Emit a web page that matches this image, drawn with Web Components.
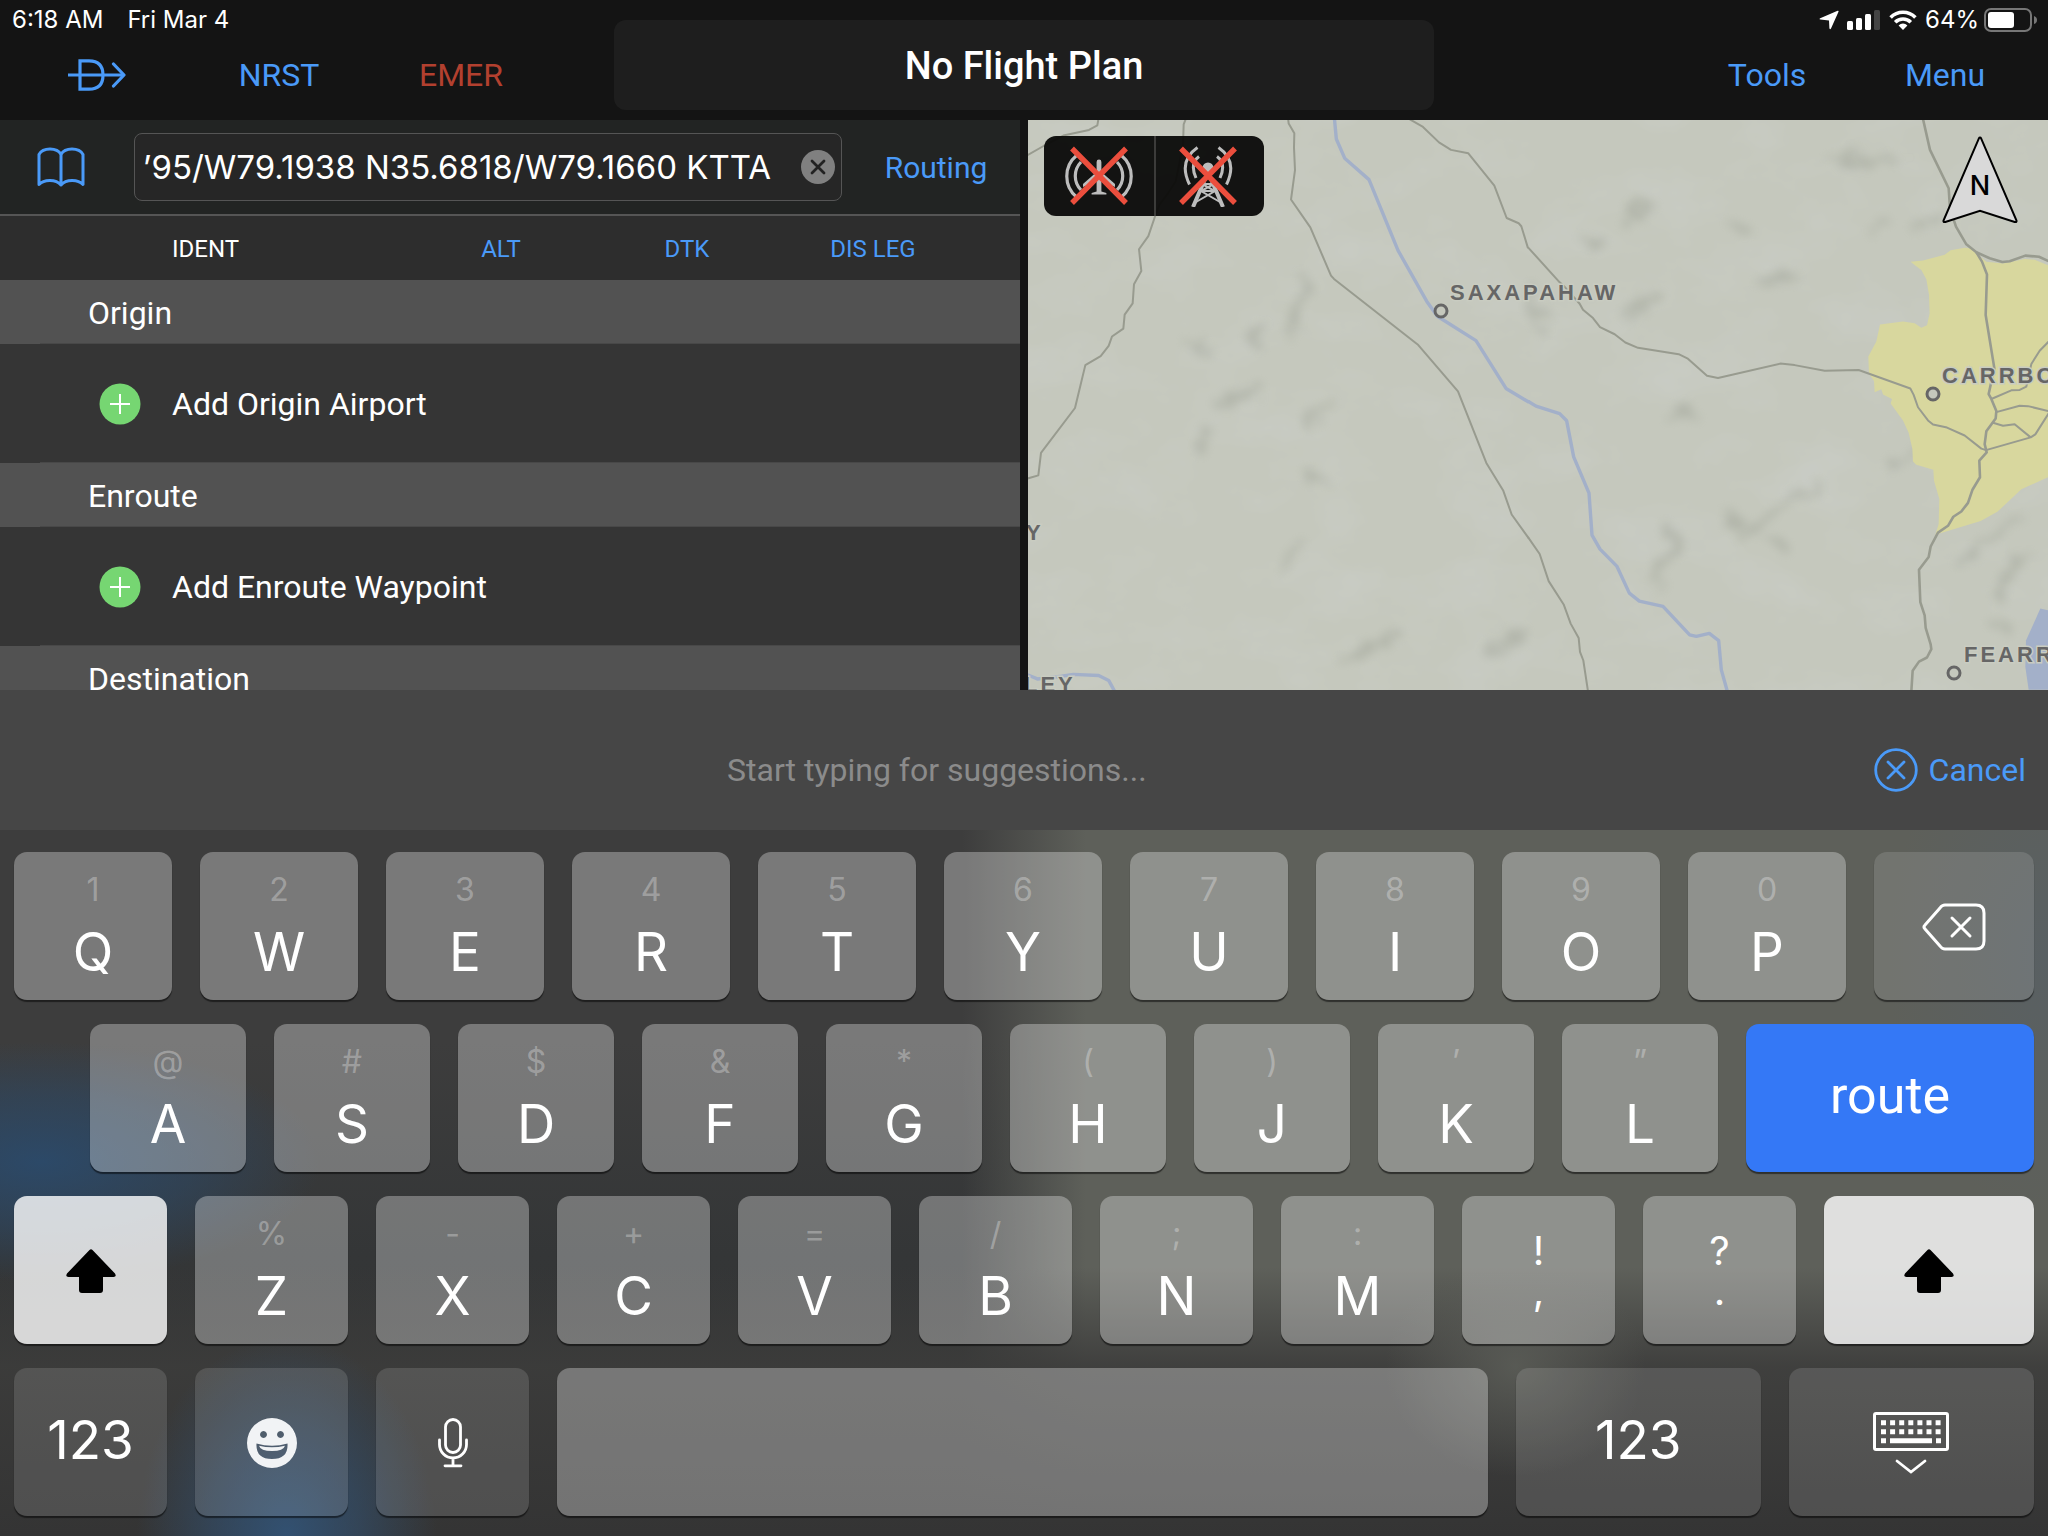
<!DOCTYPE html>
<html lang="en">
<head>
<meta charset="utf-8">
<title>Flight Plan</title>
<style>
  html, body { margin: 0; height: 100%; background: #141414; }
  body {
    font-family: Roboto, "Liberation Sans", sans-serif;
    color: #fff;
    --blue: #4a9af8;
    --body: 32px;
    --small: 24px;
    --wide-face: Inter, "Liberation Sans", sans-serif;
  }
</style>
</head>
<body>
<efb-app></efb-app>

<script>
const RESET = `
  *, *::before, *::after { box-sizing: border-box; }
  button { all: unset; box-sizing: border-box; cursor: pointer; display: flex; align-items: center; justify-content: center; }
  svg { display: block; flex: none; }
`;
function define(name, css, html, ready) {
  const template = document.createElement('template');
  template.innerHTML = `<style>${RESET}${css}</style>${html}`;
  customElements.define(name, class extends HTMLElement {
    constructor() {
      super();
      this.attachShadow({ mode: 'open' }).append(template.content.cloneNode(true));
    }
    connectedCallback() { if (ready) ready.call(this, this.shadowRoot); }
  });
}

/* ---------- status bar ---------- */
define('status-time', `
  :host { display: flex; align-items: center; gap: 24px; height: 40px; padding-left: 12px; font: 24px/40px var(--wide-face); }
`, `<span>6:18 AM</span><span>Fri Mar 4</span>`);

define('status-icons', `
  :host { display: flex; align-items: center; justify-content: flex-end; gap: 8px; height: 40px; padding-right: 10px; font: 24px/40px var(--wide-face); }
  .charge { display: flex; align-items: center; gap: 5px; }
`, `
  <svg width="20" height="20" viewBox="0 0 20 20"><path d="M18.6.8Q20 .4 19.4 2L12 18.6q-1 1.6-1.6-.4L10 10.4 1.400 9.600q-1.800-.4-.2-1.400z" fill="#fff"/></svg>
  <svg width="34" height="20" viewBox="0 0 34 20"><g fill="#fff"><rect y="11" width="6" height="9" rx="1.500"/><rect x="9" y="8" width="6" height="12" rx="1.500"/><rect x="18" y="4" width="6" height="16" rx="1.500"/></g><rect x="27" width="6" height="20" rx="1.500" fill="#444"/></svg>
  <svg width="28" height="20" viewBox="0 0 28 20"><g fill="none" stroke="#fff" stroke-width="3.600"><path d="M1.600 7.400a17.500 17.500 0 0 1 24.800 0"/><path d="M6.200 12.300a11 11 0 0 1 15.600 0"/></g><path d="M14 20l-4.400-4.600a6.200 6.200 0 0 1 8.800 0z" fill="#fff"/></svg>
  <span class="charge"><span>64%</span>
  <svg width="54" height="24" viewBox="0 0 54 24"><rect x="1" y="1" width="46" height="22" rx="6" fill="none" stroke="#777" stroke-width="2"/><rect x="4" y="4" width="26" height="16" rx="3" fill="#fff"/><path d="M50 8q3 1 3 4t-3 4z" fill="#777"/></svg></span>
`);

/* ---------- top bar ---------- */
define('top-bar', `
  :host { display: grid; grid-template-columns: 3fr 4fr 3fr; height: 120px; background: #141414; }
  nav { display: flex; height: 70px; font-size: var(--body); }
  .left { padding-left: 6px; }
  .left button { width: 182px; }
  .right { justify-content: flex-end; padding-right: 14px; }
  .right button { width: 178px; }
  button { color: var(--blue); }
  .emer { color: #b2402f; }
  .title { margin: 20px 0 10px; padding-top: 2px; border-radius: 12px; background: #1e1e1e; color: #fff; font-size: 38px; font-weight: 500; }
`, `
  <div><status-time></status-time>
    <nav class="left">
      <button aria-label="Direct to"><svg width="58" height="32" viewBox="0 0 58 32" fill="none" stroke="#4a9af8" stroke-width="3.200"><path d="M12 1.800h9c9.500 0 14 5 14 14.200s-4.500 14.200-14 14.200h-9zM0 16h55"/><path d="M45.500 5L56 16 45.500 27" stroke-linejoin="round" stroke-linecap="round"/></svg></button>
      <button>NRST</button><button class="emer">EMER</button>
    </nav></div>
  <button class="title">No Flight Plan</button>
  <div><status-icons></status-icons>
    <nav class="right"><button>Tools</button><button>Menu</button></nav></div>
`);

/* ---------- flight plan panel ---------- */
define('route-search', `
  :host { display: flex; align-items: center; height: 96px; background: #222423; border-bottom: 2px solid #555; }
  .book { width: 122px; margin-right: 12px; height: 68px; }
  .field { flex: 1; min-width: 0; display: flex; align-items: center; height: 68px; padding: 0 6px; gap: 30px; border: 1px solid #555; border-radius: 8px; background: #262626; }
  input { flex: 1; min-width: 0; height: 64px; padding: 0; margin: 0; border: 0; outline: 0; background: none; color: #fff; font: 33px var(--wide-face); text-align: right; }
  .routing { width: 178px; padding-left: 10px; height: 68px; color: var(--blue); font-size: 30px; }
`, `
  <button class="book" aria-label="Saved flight plans"><svg width="48" height="40" viewBox="0 0 48 40" fill="none" stroke="#4a9af8" stroke-width="3" stroke-linejoin="round" stroke-linecap="round"><path d="M24 38V7.500C20 .300 6 .300 2 7.500V37.500c5-5.500 17-5.500 22 .5 5-6 17-6 22-.5V7.500C42 .300 28 .300 24 7.500"/></svg></button>
  <div class="field">
    <input type="text" aria-label="Route" value="’95/W79.1938 N35.6818/W79.1660 KTTA">
    <button aria-label="Clear route"><svg width="34" height="34" viewBox="0 0 34 34"><circle cx="17" cy="17" r="17" fill="#808080"/><path d="M11 11l12 12M23 11L11 23" stroke="#222" stroke-width="2.800" stroke-linecap="round"/></svg></button>
  </div>
  <button class="routing">Routing</button>
`);

define('plan-columns', `
  :host { display: grid; grid-template-columns: 1fr repeat(3, 186px); align-items: center; height: 64px; padding: 2px 54px 0 172px; background: #2d2d2d; font-size: var(--small); box-sizing: border-box; }
  button { color: var(--blue); }
`, `<span>IDENT</span><button>ALT</button><button>DTK</button><button>DIS LEG</button>`);

define('plan-section', `
  :host { display: block; font-size: var(--body); }
  h2 { margin: 0; height: 64px; padding-left: 88px; background: linear-gradient(#484848, #484848) 40px 100% / 100% 1px no-repeat #525252; font: inherit; line-height: 66px; }
`, `<h2><slot name="title"></slot></h2><slot></slot>`);

define('plan-add', `
  :host { display: block; }
  button { justify-content: flex-start; gap: 31px; width: 100%; height: 119px; padding-left: 99px; background: linear-gradient(#484848, #484848) 40px 100% / 100% 1px no-repeat #353535; }
`, `<button><svg width="42" height="42" viewBox="0 0 42 42"><circle cx="21" cy="21" r="20.500" fill="#76d672"/><path d="M21 11v20M11 21h20" stroke="#fff" stroke-width="2"/></svg><slot></slot></button>`);

define('flight-panel', `
  :host { display: block; overflow: hidden; background: #353535; }
`, `
  <route-search></route-search>
  <plan-columns></plan-columns>
  <plan-section><span slot="title">Origin</span><plan-add>Add Origin Airport</plan-add></plan-section>
  <plan-section><span slot="title">Enroute</span><plan-add>Add Enroute Waypoint</plan-add></plan-section>
  <plan-section><span slot="title">Destination</span></plan-section>
`);

/* ---------- map ---------- */
define('terrain-map', `
  :host { display: block; width: 100%; height: 100%; }
  svg { width: 100%; height: 100%; }
  path { vector-effect: non-scaling-stroke; }
  .road { fill: none; stroke: #989b8f; stroke-width: 2px; stroke-linejoin: round; }
  .wide { stroke-width: 2.600px; }
  .river { fill: none; stroke: #a3b0c9; stroke-width: 3.400px; stroke-linejoin: round; }
  text { font: bold 22px "Liberation Sans", Arial, sans-serif; letter-spacing: 3px; fill: #666; stroke: #c9ccc1; stroke-width: 3px; paint-order: stroke; }
  circle { fill: #c5c8bd; stroke: #666; stroke-width: 3px; }
`, `
  <svg viewBox="0 0 1020 570" preserveAspectRatio="xMinYMin slice" role="img" aria-label="Map">
    <defs>
      <filter id="relief" x="0" y="0" width="100%" height="100%"><feTurbulence type="fractalNoise" baseFrequency="0.012 0.018" numOctaves="4" seed="8"/><feColorMatrix values="0 0 0 0 .58  0 0 0 0 .60  0 0 0 0 .55  2.200 0 0 0 -.98"/></filter>
      <filter id="soft" x="-20%" y="-20%" width="140%" height="140%"><feTurbulence type="fractalNoise" baseFrequency="0.05" numOctaves="3" seed="3" result="n"/><feDisplacementMap in="SourceGraphic" in2="n" scale="34" xChannelSelector="R" yChannelSelector="G"/><feGaussianBlur stdDeviation="5"/></filter>
    </defs>
    <rect width="1020" height="570" fill="#c5c8bd"/>
    <rect width="1020" height="570" filter="url(#relief)"/>
    <g filter="url(#soft)" stroke="#999d91" stroke-width="8" stroke-linecap="round" fill="none" opacity=".42">
      <path d="M262 215l8-30 6-26M222 218l20-10M155 226l22 3M192 280l34-6M277 300l20-10M167 328l10-14M280 358l20 6M260 440l10-14M310 545l30-16 24-14M460 530l34-16M500 170l10 20M720 410l24-14 28-22 18-8M712 406l-14-8M760 430l-18-14M628 462l14-30 4-26M862 344l30-10M925 446l50-34 20-18M970 480l10-24 14-22M960 506l14 4M740 160l24-4M700 108l12 0M848 112l8-8M895 106l8-4M800 34l34 10 40-8M590 200l20-14 22-10M510 200l6 6M560 120l14 4M640 300l20-8M600 96l22-12"/>
    </g>
    <g transform="translate(500 -10) scale(.33333 .37628)">
      <path fill="#d8d79e" d="M1148 403L1185 400 1250 385 1268 373 1310 366 1330 368 1350 385 1375 403 1425 408 1490 396 1520 398 1580 420V968L1480 1008 1408 1068 1358 1092 1222 1129 1232 1100 1234 1034 1218 985 1216 956 1165 943 1155 934 1153 900 1142 858 1125 825 1088 780 1092 768 1065 756 1060 742 1040 750 1038 720 1023 700 1021 655 1045 615 1056 570 1125 562 1160 567 1180 579 1197 572 1205 540 1203 490 1195 450 1180 425 1160 412z"/>
      <path fill="#a3b0c9" d="M1537 1325l43 8V1541H1502l-10-61 2-70z"/>
      <path class="river" d="M0 774L24 787 95 807 116 826 137 922 183 1018 192 1130 216 1167 267 1213 304 1284 334 1305 405 1319 485 1395 505 1399 544 1391 572 1410 580 1488 598 1545"/>
      <path class="road" d="M0 1135L35 1180 62 1252 107 1314 128 1365 152 1403 156 1440 166 1463 180 1545"/>
      <path class="road" d="M0 365L95 458 110 470 155 515 165 531 195 553 216 577 260 596 292 618 330 632 452 649 478 660 537 706 570 712 757 674 800 678 890 693 992 691 1147 740 1157 757 1170 790 1200 825 1215 836 1257 844 1310 865 1360 900 1374 904 1508 870 1522 862 1570 795"/>
      <path class="road wide" d="M1184 20L1206 106 1262 208 1266 262 1284 310 1315 357 1345 378 1385 394 1423 404 1445 402 1492 387 1533 390 1570 405"/>
      <path class="road wide" d="M1345 378L1362 403 1377 437 1373 545 1399 686 1382 755 1390 768 1405 800 1403 820 1375 854 1370 888 1376 910 1354 932 1356 976 1333 1010 1320 1044 1300 1067 1276 1081 1260 1105 1230 1123 1208 1160 1202 1188 1173 1222 1177 1308 1190 1343 1193 1376 1208 1420 1210 1433 1197 1455 1173 1466 1154 1490 1150 1545"/>
      <path class="road" d="M1390 768L1450 745 1475 744 1495 735 1510 675 1535 640 1570 608M1405 803L1475 786 1500 787 1570 802M1395 831L1425 839 1460 835 1508 870"/>
    </g>
    <g transform="translate(-8 -10) scale(.33333 .37628)">
      <path class="river" d="M943 20L949 77 974 128 1047 185 1134 373 1220 508 1252 548 1368 613 1458 740 1526 776M20 1500L52 1512 125 1505 160 1500 236 1503 266 1516 284 1545"/>
      <path class="road" d="M20 121L72 95 130 68 207 53 232 41 236 20M499 20L491 38 489 95 467 190 445 220 418 252 405 283 385 335 357 370 364 428 342 463 338 514 314 544 310 581 276 602 266 627 242 654 196 678 165 792 63 911 55 971 20 980"/>
      <path class="road" d="M804 20L806 36 823 62 822 100 825 160 813 238 871 312 933 440 942 449 1193 623 1314 748 1399 938 1450 1012 1475 1075 1526 1138"/>
      <path class="road" d="M1160 20L1209 45 1257 86 1293 106 1345 115 1423 201 1460 287 1496 301 1504 309 1524 367"/>
    </g>
    <circle cx="413" cy="191" r="6"/><circle cx="905" cy="274" r="6"/><circle cx="926" cy="553" r="6"/>
    <text x="422" y="180">SAXAPAHAW</text>
    <text x="914" y="263">CARRBO</text>
    <text x="936" y="542">FEARR</text>
    <text x="-2" y="420">Y</text>
    <text x="-4" y="572">LEY</text>
  </svg>
`);

define('map-view', `
  :host { display: block; position: relative; overflow: hidden; background: #c5c8bd; }
  .links { position: absolute; left: 16px; top: 16px; display: flex; border-radius: 12px; overflow: hidden; background: rgba(10, 10, 8, .95); }
  .links button { width: 110px; height: 80px; }
  .links button + button { border-left: 2px solid #3c3c3a; padding-right: 4px; }
  .north { position: absolute; right: 30px; top: 16px; width: 76px; height: 88px; font: 500 27px var(--wide-face); color: #000; }
  .north svg { position: absolute; inset: 0; }
  .north span { position: relative; padding-top: 10px; }
`, `
  <terrain-map></terrain-map>
  <div class="links">
    <button aria-label="GPS off"><svg width="76" height="62" viewBox="0 0 76 62"><g fill="none" stroke="#bdbdbd" stroke-width="3.200"><path d="M15.500 10.500a27 27 0 0 0 0 41.500M20 17a20 20 0 0 0 0 28M60.500 10.500a27 27 0 0 1 0 41.500M56 17a20 20 0 0 1 0 28"/></g><path d="M35.600 17a2.400 2.400 0 0 1 4.800 0V27L54 39v3L40.400 36V46.500l5 1.500v1.500H30.600V48l5-1.500V36L22 42v-3L35.600 27z" fill="#bdbdbd"/><path d="M11 3.500L65 58M65 3.500L11 58" stroke="#eb4e3d" stroke-width="5.400"/></svg></button>
    <button aria-label="Datalink off"><svg width="62" height="62" viewBox="0 0 62 62"><g fill="none" stroke="#bdbdbd" stroke-width="3"><path d="M20.500 2.500Q1 16 12.500 39.500M22 11.500q-9.500 7-3 21.500M41.500 2.500Q61 16 49.500 39.500M40 11.500q9.500 7 3 21.500"/><path d="M28 34L16 62M34 34L46 62" stroke-width="4"/><path d="M27 39h8M25 39l13 7-19 11M37 39l-13 7 19 11M23 46h16" stroke-width="2"/></g><circle cx="31" cy="23" r="5.500" fill="#bdbdbd"/><path d="M4 3.500L58 58M58 3.500L4 58" stroke="#eb4e3d" stroke-width="5.400"/></svg></button>
  </div>
  <button class="north" aria-label="North up"><svg width="76" height="88" viewBox="0 0 76 88"><path d="M36.800 2.600q1.200-2 2.400 0L74.500 84.500q.4 2-1.800 1.500L38 74.800 3.300 86q-2.200.5-1.800-1.500z" fill="#d9d9d9" stroke="#000" stroke-width="2"/></svg><span>N</span></button>
`);

/* ---------- suggestion bar ---------- */
define('suggestion-bar', `
  :host { display: flex; align-items: center; height: 140px; padding: 20px 22px 0 0; background: #464646; font-size: var(--body); }
  p { flex: 1; margin: 0; text-align: center; color: #8b8b8b; }
  button { gap: 11px; color: var(--blue); }
`, `
  <p>Start typing for suggestions...</p>
  <button><svg width="44" height="44" viewBox="0 0 44 44" fill="none" stroke="#4a9af8" stroke-width="2.800" stroke-linecap="round"><circle cx="22" cy="22" r="20.300"/><path d="M14 14l16 16M30 14L14 30"/></svg>Cancel</button>
`);

/* ---------- keyboard ---------- */
define('key-cap', `
  :host { display: block; flex: var(--w, 158) 1 0; min-width: 0; }
  button { flex-direction: column; width: 100%; height: 148px; padding-bottom: 4px; border-radius: 13px; background: rgba(255, 255, 255, .31); box-shadow: 0 2px 1px rgba(0, 0, 0, .5); color: #fff; font: 53px/62px var(--wide-face); }
  .hint { display: none; font-size: 32px; color: rgba(255, 255, 255, .3); }
  :host([hint]) .hint { display: block; }
  :host([hint]) button { padding-bottom: 10px; }
  :host([label]) button { padding: 2px 0 0; }
  :host([kind=dark]) button { background: rgba(255, 255, 255, .13); }
  :host([kind=light]) button { background: rgba(255, 255, 255, .8); color: #000; }
  :host([kind=blue]) button { background: #3478f6; font: 52px/62px Roboto, sans-serif; }
  :host([kind=pair]) button { font-size: 40px; line-height: 40px; padding: 2px 0 0; }
  :host([kind=pair]) .hint { font-size: 40px; color: #fff; }
`, `<button><span class="hint"></span><slot></slot></button>`, function (root) {
  root.querySelector('.hint').textContent = this.getAttribute('hint') || '';
  const label = this.getAttribute('label');
  if (label) root.querySelector('button').setAttribute('aria-label', label);
});

const keys = (pairs, w) => pairs.split(' ').map(p => `<key-cap hint="${p[0] === '&' ? '&amp;' : p[0]}" style="--w:${w}">${p.slice(1)}</key-cap>`).join('');
const shift = `<svg width="50" height="44" viewBox="0 0 50 44"><path d="M23.500 1q1.500-1.500 3 0L49 24.500q2 3.500-1.500 3.500H37V41q0 3-3 3H16q-3 0-3-3V28H2.500Q-1 28 1 24.500z" fill="#000"/></svg>`;

define('key-board', `
  :host {
    display: flex; flex-direction: column; gap: 24px; padding: 22px 14px 20px;
    background:
      radial-gradient(ellipse 280px 120px at 2% 47%, rgba(42, 76, 112, .85), rgba(42, 76, 112, .45) 55%, transparent),
      radial-gradient(ellipse 150px 200px at 14% 100%, rgba(50, 86, 124, .85), rgba(50, 84, 120, .5) 50%, transparent),
      radial-gradient(ellipse 130px 110px at 74% 76%, rgba(94, 96, 90, .8), transparent),
      radial-gradient(ellipse 160px 260px at 100% 18%, rgba(84, 96, 108, .5), transparent),
      linear-gradient(to bottom, transparent 62%, rgba(60, 60, 59, .9) 76%, #343434 100%),
      linear-gradient(to right, transparent 47%, #5e605a 53%),
      linear-gradient(to bottom, #3d3d3d 30%, #343637 60%, #333);
  }
  .row { display: flex; gap: 28px; }
  .indent { margin-left: 76px; }
`, `
  <div class="row">${keys('1Q 2W 3E 4R 5T 6Y 7U 8I 9O 0P', 158)}
    <key-cap kind="dark" label="Delete" style="--w:160"><svg width="64" height="48" viewBox="0 0 64 48" fill="none" stroke="#fff" stroke-width="3" stroke-linecap="round" stroke-linejoin="round"><path d="M23 2H54q8 0 8 8V38q0 8-8 8H23q-3 0-5-3L3 26q-2-2 0-4L18 5q2-3 5-3z"/><path d="M30 15l18 18M48 15L30 33"/></svg></key-cap></div>
  <div class="row indent">${keys('@A #S $D &F *G (H )J ’K ”L', 156)}
    <key-cap kind="blue" style="--w:288">route</key-cap></div>
  <div class="row">
    <key-cap kind="light" label="Shift" style="--w:153">${shift}</key-cap>
    ${keys('%Z -X +C =V /B ;N :M', 153)}
    <key-cap kind="pair" hint="!" style="--w:153">,</key-cap>
    <key-cap kind="pair" hint="?" style="--w:153">.</key-cap>
    <key-cap kind="light" label="Shift" style="--w:210">${shift}</key-cap></div>
  <div class="row">
    <key-cap kind="dark" style="--w:153">123</key-cap>
    <key-cap kind="dark" label="Emoji" style="--w:153"><svg width="50" height="50" viewBox="0 0 50 50"><path fill="#f1f3f5" fill-rule="evenodd" d="M25 0a25 25 0 1 1 0 50 25 25 0 0 1 0-50zM16.500 13a3.400 3.500 0 1 0 .01 0zM33.500 13a3.400 3.500 0 1 0 .01 0zM9.500 25.500Q8.500 41 25 41T40.500 25.500Q25 30 9.500 25.500z"/><path d="M12 27.700q13 3.300 26 0-1.500 5.300-13 5.300T12 27.700z" fill="#f1f3f5"/></svg></key-cap>
    <key-cap kind="dark" label="Dictate" style="--w:153"><svg width="30" height="50" viewBox="0 0 30 50" fill="none" stroke="#fff" stroke-width="2.800" stroke-linecap="round"><rect x="7.500" y="1.500" width="15" height="33" rx="7.500"/><path d="M1.500 22v4.500a13.500 13.500 0 0 0 27 0V22M15 40.500v7M7 47.800h16"/></svg></key-cap>
    <key-cap label="Space" style="--w:930"></key-cap>
    <key-cap kind="dark" style="--w:245">123</key-cap>
    <key-cap kind="dark" label="Hide keyboard" style="--w:245"><svg width="76" height="62" viewBox="0 0 76 62" fill="none" stroke="#fff"><rect x="1.500" y="1.500" width="73" height="36" rx="1.500" stroke-width="3"/><path d="M8 10.700h62M8 19.700h62" stroke-width="5" stroke-dasharray="5 4.100"/><path d="M8 28.700h5M17 28.700h42M63 28.700h5" stroke-width="5"/><path d="M24 49l14 11 14-11" stroke-width="2.800" stroke-linecap="round"/></svg></key-cap></div>
`);

define('efb-app', `
  :host { display: grid; grid-template-rows: auto minmax(0, 1fr) auto auto; height: 100vh; }
  main { display: grid; grid-template-columns: 1fr 1fr; gap: 8px; min-height: 0; overflow: hidden; }
  main > * { min-width: 0; min-height: 0; }
`, `
  <top-bar></top-bar>
  <main><flight-panel></flight-panel><map-view></map-view></main>
  <suggestion-bar></suggestion-bar>
  <key-board></key-board>
`);
</script>
</body>
</html>
